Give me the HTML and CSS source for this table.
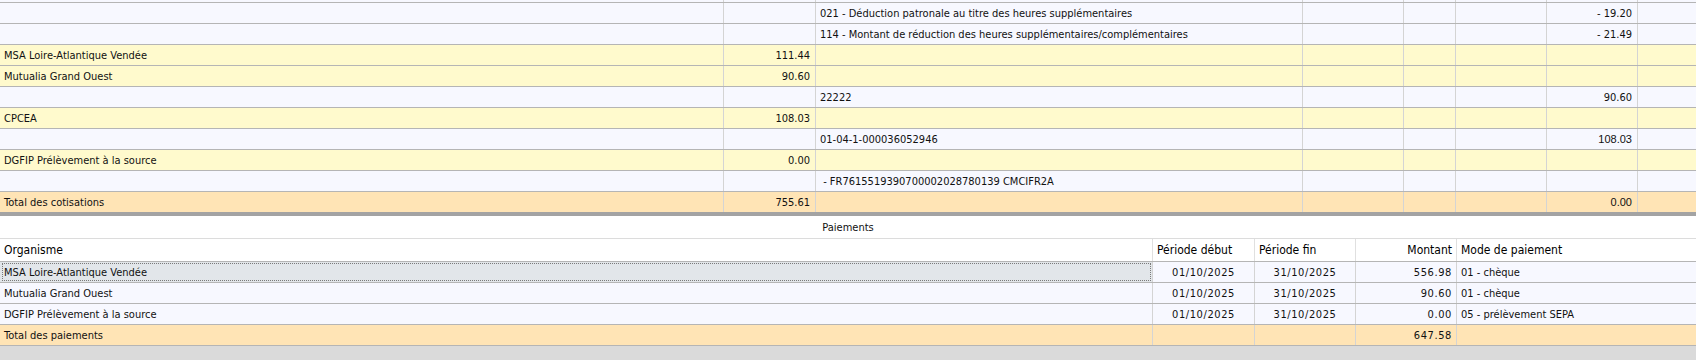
FILE: index.html
```html
<!DOCTYPE html>
<html lang="fr">
<head>
<meta charset="utf-8">
<title>Cotisations et paiements</title>
<link rel="stylesheet" href="styles.css">
</head>
<body>
<div class="page">
  <div class="tbl top">
    <div class="row sliver lt"><div class="c"></div><div class="c"></div><div class="c"></div><div class="c"></div><div class="c"></div><div class="c"></div><div class="c"></div><div class="c"></div></div>
    <div class="row lt"><div class="c"></div><div class="c"></div><div class="c">021 - Déduction patronale au titre des heures supplémentaires</div><div class="c"></div><div class="c"></div><div class="c"></div><div class="c r">- 19.20</div><div class="c"></div></div>
    <div class="row lt"><div class="c"></div><div class="c"></div><div class="c">114 - Montant de réduction des heures supplémentaires/complémentaires</div><div class="c"></div><div class="c"></div><div class="c"></div><div class="c r">- 21.49</div><div class="c"></div></div>
    <div class="row yl"><div class="c">MSA Loire-Atlantique Vendée</div><div class="c r">111.44</div><div class="c"></div><div class="c"></div><div class="c"></div><div class="c"></div><div class="c"></div><div class="c"></div></div>
    <div class="row yl"><div class="c">Mutualia Grand Ouest</div><div class="c r">90.60</div><div class="c"></div><div class="c"></div><div class="c"></div><div class="c"></div><div class="c"></div><div class="c"></div></div>
    <div class="row lt"><div class="c"></div><div class="c"></div><div class="c">22222</div><div class="c"></div><div class="c"></div><div class="c"></div><div class="c r">90.60</div><div class="c"></div></div>
    <div class="row yl"><div class="c">CPCEA</div><div class="c r">108.03</div><div class="c"></div><div class="c"></div><div class="c"></div><div class="c"></div><div class="c"></div><div class="c"></div></div>
    <div class="row lt"><div class="c"></div><div class="c"></div><div class="c">01-04-1-000036052946</div><div class="c"></div><div class="c"></div><div class="c"></div><div class="c r ar">108.03</div><div class="c"></div></div>
    <div class="row yl"><div class="c">DGFIP Prélèvement à la source</div><div class="c r">0.00</div><div class="c"></div><div class="c"></div><div class="c"></div><div class="c"></div><div class="c"></div><div class="c"></div></div>
    <div class="row lt"><div class="c"></div><div class="c"></div><div class="c">&nbsp;- FR7615519390700002028780139 CMCIFR2A</div><div class="c"></div><div class="c"></div><div class="c"></div><div class="c"></div><div class="c"></div></div>
    <div class="row tot last"><div class="c">Total des cotisations</div><div class="c r">755.61</div><div class="c"></div><div class="c"></div><div class="c"></div><div class="c"></div><div class="c r ar">0.00</div><div class="c"></div></div>
  </div>
  <div class="sep"></div>
  <div class="caption">Paiements</div>
  <div class="tbl bottom">
    <div class="row head"><div class="c">Organisme</div><div class="c">Période début</div><div class="c">Période fin</div><div class="c r">Montant</div><div class="c">Mode de paiement</div></div>
    <div class="row lt"><div class="c focus"><span class="fr">MSA Loire-Atlantique Vendée</span></div><div class="c m num">01/10/2025</div><div class="c m num">31/10/2025</div><div class="c r num">556.98</div><div class="c">01 - chèque</div></div>
    <div class="row lt"><div class="c">Mutualia Grand Ouest</div><div class="c m num">01/10/2025</div><div class="c m num">31/10/2025</div><div class="c r num">90.60</div><div class="c">01 - chèque</div></div>
    <div class="row lt"><div class="c">DGFIP Prélèvement à la source</div><div class="c m num">01/10/2025</div><div class="c m num">31/10/2025</div><div class="c r num">0.00</div><div class="c">05 - prélèvement SEPA</div></div>
    <div class="row tot"><div class="c">Total des paiements</div><div class="c"></div><div class="c"></div><div class="c r num">647.58</div><div class="c"></div></div>
  </div>
  <div class="filler"></div>
</div>
</body>
</html>
```
FILE: styles.css
```css
html, body {
  margin: 0;
  padding: 0;
  background: #ffffff;
}
.page {
  width: 1696px;
  height: 360px;
  overflow: hidden;
  display: flex;
  flex-direction: column;
  font-family: "DejaVu Sans Condensed", "DejaVu Sans", sans-serif;
  font-stretch: condensed;
  font-size: 11px;
  color: #111111;
}
.tbl {
  display: flex;
  flex-direction: column;
}
.row {
  display: grid;
  height: 21px;
  box-sizing: border-box;
  border-bottom: 1px solid #b5b5b5;
}
.top .row {
  grid-template-columns: 724px 92px 487px 101px 52px 91px 91px 1fr;
}
.bottom .row {
  grid-template-columns: 1153px 102px 101px 101px 1fr;
}
.row.sliver {
  height: 3px;
}
.row.last {
  height: 20px;
  border-bottom: none;
}
.c {
  box-sizing: border-box;
  border-right: 1px solid #d4d4d4;
  padding: 0 4px;
  display: flex;
  align-items: center;
  white-space: nowrap;
  overflow: hidden;
  min-width: 0;
}
.c:last-child {
  border-right: none;
}
.c.r {
  justify-content: flex-end;
  padding-right: 5px;
}
.c.m {
  justify-content: center;
}
.c.ar {
  font-family: "Liberation Sans", Arial, sans-serif;
  font-stretch: normal;
  font-size: 11px;
}
.c.num {
  letter-spacing: 0.6px;
}
.lt {
  background: #f7f8ff;
}
.yl {
  background: #fffacd;
}
.tot {
  background: #ffe4b5;
}
.sep {
  height: 4px;
  background: #a3a3a3;
}
.caption {
  height: 22px;
  display: flex;
  align-items: center;
  justify-content: center;
  background: #ffffff;
  border-bottom: 1px solid #dcdcdc;
}
.bottom .row.head {
  height: 23px;
  background: #ffffff;
  border-bottom: 1px solid #b5b5b5;
  font-size: 12px;
  color: #000000;
}
.bottom .row.head .c {
  border-right-color: #e0e0e0;
}
.bottom .row.head .c.r {
  padding-right: 4px;
}
.bottom .c.r {
  padding-right: 4px;
}
.c.focus {
  background: #e2e6ea;
  padding: 1px 1px 1px 2px;
}
.fr {
  flex: 1;
  align-self: stretch;
  display: flex;
  align-items: center;
  padding-left: 1px;
  border: 1px dotted #7a7a7a;
}
.filler {
  flex: 1;
  background: #dadada;
}
```
